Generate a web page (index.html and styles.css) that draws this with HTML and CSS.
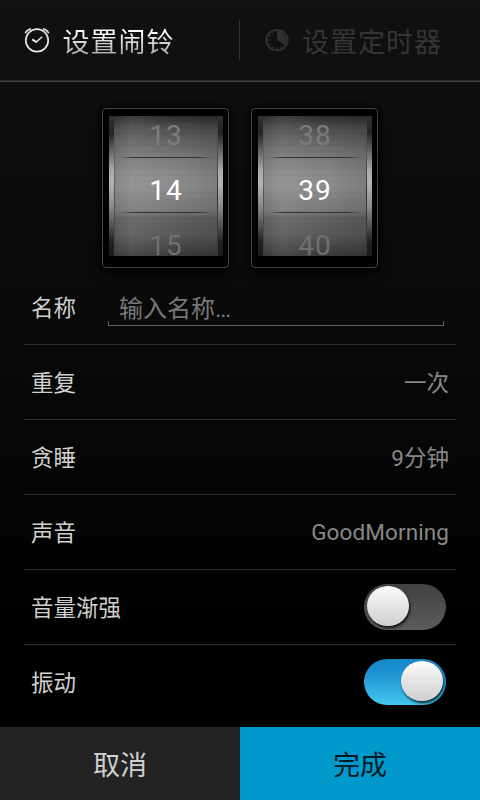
FILE: index.html
```html
<!DOCTYPE html>
<html lang="zh-CN">
<head>
<meta charset="utf-8">
<title>设置闹铃</title>
<link rel="stylesheet" href="styles.css">
</head>
<body>
<div class="screen">
  <header class="tabs">
    <div class="tab tab-active">
      <svg class="tab-icon" width="26" height="26" viewBox="0 0 26 26" fill="none" stroke="#e4e4e4">
        <circle cx="13" cy="13.4" r="11.2" stroke-width="1.7"/>
        <path d="M1.2 6.2 Q3 2.8 7 1.8 M24.8 6.2 Q23 2.8 19 1.8" stroke-width="1.7"/>
        <path d="M8.3 12.5 L12.2 15 L18.2 9.8" stroke-width="1.5"/>
        <path d="M8.3 12.5 L12.2 15" stroke-width="2"/>
      </svg>
      <span class="tab-text">设置闹铃</span>
    </div>
    <div class="tab tab-idle">
      <svg class="tab-icon" width="26" height="26" viewBox="0 0 26 26" fill="none">
        <ellipse cx="13" cy="13.1" rx="10.8" ry="10.1" stroke="#2d2f31" stroke-width="2"/>
        <path d="M13 13 L13 3.5 A10 10 0 0 1 21 18.6 Z" fill="#2d2f31"/>
        <path d="M3 13H6.2 M13 23V20 M7.7 5.4L9 7.5 M4.8 8.3L7 9.6 M5 18L7 16.7 M8 21.2L9.2 19.2 M18 21.2L16.8 19.2" stroke="#2d2f31" stroke-width="1.4"/>
      </svg>
      <span class="tab-text">设置定时器</span>
    </div>
  </header>

  <section class="wheels">
    <div class="wheel"><div class="drum">
      <span class="digit digit-prev">13</span><span class="digit digit-current">14</span><span class="digit digit-next">15</span>
    </div></div>
    <div class="wheel"><div class="drum">
      <span class="digit digit-prev">38</span><span class="digit digit-current">39</span><span class="digit digit-next">40</span>
    </div></div>
  </section>

  <main class="rows">
    <div class="row"><span class="label">名称</span><div class="field"><span>输入名称…</span></div></div>
    <div class="row"><span class="label">重复</span><span class="value">一次</span></div>
    <div class="row"><span class="label">贪睡</span><span class="value">9分钟</span></div>
    <div class="row"><span class="label">声音</span><span class="value value-latin">GoodMorning</span></div>
    <div class="row"><span class="label">音量渐强</span><div class="switch"><i class="knob"></i></div></div>
    <div class="row"><span class="label">振动</span><div class="switch switch-on"><i class="knob"></i></div></div>
  </main>

  <footer class="actions">
    <div class="action">取消</div>
    <div class="action action-done">完成</div>
  </footer>
</div>
</body>
</html>
```

FILE: styles.css
```css
* { box-sizing: border-box; }
body { margin: 0; background: #000; }
.screen {
  width: 480px;
  height: 800px;
  display: flex;
  flex-direction: column;
  overflow: hidden;
  font-family: Roboto, "Noto Sans CJK SC", sans-serif;
  background: linear-gradient(#111 0, #0e0e0e 100px, #090909 340px, #000 650px);
}

.tabs {
  height: 82px;
  flex: none;
  display: flex;
  border-bottom: 1px solid #484848;
  box-shadow: inset 0 -1px #2b2b2b;
}
.tab {
  width: 240px;
  display: flex;
  align-items: center;
  padding-left: 24px;
  gap: 12.5px;
  font-size: 27px;
  line-height: 40px;
  letter-spacing: 1px;
  white-space: nowrap;
}
.tab-icon { flex: none; margin-bottom: 1px; }
.tab-text { padding-top: 4px; }
.tab-active {
  background: linear-gradient(#333, #333) right 0 top 20px / 1px 40px no-repeat;
}
.tab-active .tab-text {
  color: transparent;
  background: linear-gradient(#fff 30%, #a0a0a0 85%);
  -webkit-background-clip: text;
  background-clip: text;
}
.tab-idle { color: #353535; gap: 12px; }

.wheels {
  height: 188px;
  flex: none;
  display: flex;
  justify-content: center;
  gap: 22px;
  padding-top: 25.5px;
}
.wheel {
  width: 127px;
  height: 160px;
  padding: 7px 5px 11px 6px;
  background: #000;
  border: 1px solid #444;
  border-radius: 4px;
  box-shadow: 0 2px 8px 2px #000;
}
.drum {
  height: 140px;
  overflow: hidden;
  display: flex;
  flex-direction: column;
  background:
    linear-gradient(90deg, transparent, #333 15%, #333 85%, transparent) center 41px / 92px 1px no-repeat,
    linear-gradient(90deg, transparent, #333 15%, #333 85%, transparent) center 96px / 92px 1px no-repeat,
    linear-gradient(transparent, rgba(0,0,0,.35) 50%, transparent) left 5px top 14px / 1px 126px no-repeat,
    linear-gradient(transparent, rgba(0,0,0,.6) 50%, transparent) right 5px top 14px / 1px 126px no-repeat,
    linear-gradient(#303030, #252525 12%, #aaa 39%, #b4b4b4 48%, #888 65%, #222 90%, #1b1b1b) left / 5px 100% no-repeat,
    linear-gradient(#303030, #252525 12%, #aaa 39%, #b4b4b4 48%, #888 65%, #222 90%, #1b1b1b) right / 5px 100% no-repeat,
    repeating-linear-gradient(transparent 0 2px, rgba(255,255,255,.015) 2px 3px, transparent 3px 5px, rgba(0,0,0,.025) 5px 6px),
    linear-gradient(90deg, rgba(0,0,0,.08), rgba(255,255,255,.08) 20%, transparent 60%, rgba(0,0,0,.12)),
    linear-gradient(#2b2b2b 0, #4b4b4b 8%, #666 20%, #777 29%, #898989 42%, #8c8c8c 50%, #777 68%, #606060 73%, #575757 85%, #383838 100%);
}
.digit {
  height: 55px;
  flex: none;
  text-align: center;
  line-height: 55px;
  font-size: 28px;
  letter-spacing: 1px;
}
.digit-prev {
  height: 40px;
  line-height: 40px;
  margin-bottom: 7px;
  color: #7c7c7c;
}
.digit-current { color: #fff; }
.digit-next {
  height: 20px;
  line-height: 20px;
  margin-top: 18px;
  color: #707070;
}

.rows {
  height: 457px;
  flex: none;
  padding: 0 24px;
}
.row {
  height: 75px;
  display: flex;
  align-items: center;
  justify-content: space-between;
  padding: 0 7px;
  font-size: 22.5px;
  line-height: 32px;
  border-bottom: 1px solid #2c2c2c;
}
.row:last-child { border-bottom-color: transparent; }
.label { padding-top: 2px; color: #d0d0d0; }
.value { padding-top: 2px; color: #888; }
.value-latin { padding-top: 0; letter-spacing: .1px; }
.field {
  width: 336px;
  height: 37px;
  margin: 0 5px 0 0;
  padding: 2px 11px 0;
  color: #777;
  font-size: 24px;
  line-height: 36px;
  background:
    linear-gradient(#606060, #606060) left bottom / 1px 5px no-repeat,
    linear-gradient(#606060, #606060) right bottom / 1px 5px no-repeat,
    linear-gradient(#606060, #606060) left bottom / 100% 1px no-repeat;
}
.switch {
  width: 82px;
  height: 46px;
  margin-right: 3px;
  padding: 2px 3px;
  display: flex;
  border-radius: 23px;
  background: linear-gradient(#414141, #5c5c5c);
}
.switch-on {
  justify-content: flex-end;
  background: linear-gradient(#1687c8, #1b91cf 25%, #43c8ee);
}
.knob {
  width: 42px;
  height: 40px;
  border-radius: 50%;
  background: linear-gradient(#fbfbfb, #cfcfcf);
  box-shadow: 1px 2px 3px rgba(0,0,0,.85);
}

.actions {
  height: 73px;
  flex: none;
  display: flex;
}
.action {
  width: 240px;
  display: flex;
  align-items: center;
  justify-content: center;
  padding-top: 4px;
  font-size: 27px;
  line-height: 40px;
  color: #d0d0d0;
  background: #232323;
}
.action-done {
  color: #051a22;
  background: #0099cc;
}
```
